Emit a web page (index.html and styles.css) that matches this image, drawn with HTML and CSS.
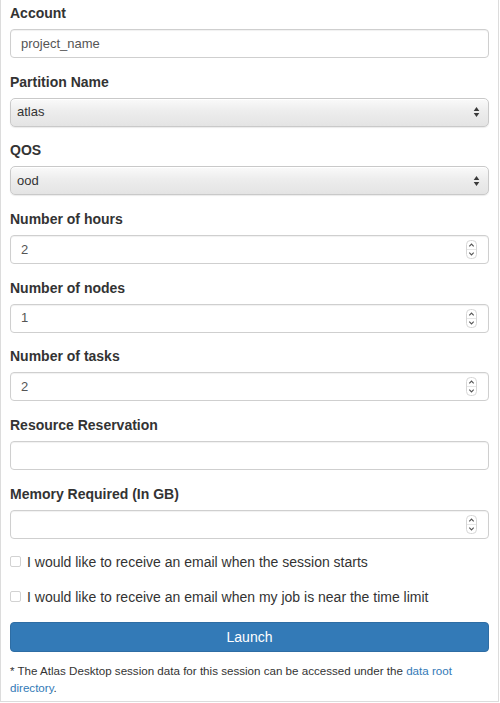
FILE: index.html
```html
<!DOCTYPE html>
<html>
<head>
<meta charset="utf-8">
<link rel="stylesheet" href="styles.css">
</head>
<body>
<div class="panel">
  <form class="form">
    <div class="group">
      <label class="label">Account</label>
      <div class="control"><input class="field" value="project_name"></div>
    </div>
    <div class="group">
      <label class="label">Partition Name</label>
      <div class="control select"><span class="field sel-text">atlas</span>
        <svg class="arrows" width="7" height="12" viewBox="0 0 7 12"><path d="M3.5 1 L6.3 5 L0.7 5 Z M0.7 7 L6.3 7 L3.5 11 Z" fill="#3a3a3a"/></svg>
      </div>
    </div>
    <div class="group">
      <label class="label">QOS</label>
      <div class="control select"><span class="field sel-text">ood</span>
        <svg class="arrows" width="7" height="12" viewBox="0 0 7 12"><path d="M3.5 1 L6.3 5 L0.7 5 Z M0.7 7 L6.3 7 L3.5 11 Z" fill="#3a3a3a"/></svg>
      </div>
    </div>
    <div class="group">
      <label class="label">Number of hours</label>
      <div class="control"><input class="field" value="2">
        <svg class="spin" width="11" height="19" viewBox="0 0 11 19"><rect x="0.5" y="0.5" width="10" height="18" rx="4" fill="#fff" stroke="#d6d6d6"/><line x1="1" y1="9.5" x2="10" y2="9.5" stroke="#e6e6e6"/><path d="M3.3 6.3 L5.5 4 L7.7 6.3" fill="none" stroke="#555" stroke-width="1.1"/><path d="M3.3 12.7 L5.5 15 L7.7 12.7" fill="none" stroke="#555" stroke-width="1.1"/></svg>
      </div>
    </div>
    <div class="group">
      <label class="label">Number of nodes</label>
      <div class="control"><input class="field" value="1">
        <svg class="spin" width="11" height="19" viewBox="0 0 11 19"><rect x="0.5" y="0.5" width="10" height="18" rx="4" fill="#fff" stroke="#d6d6d6"/><line x1="1" y1="9.5" x2="10" y2="9.5" stroke="#e6e6e6"/><path d="M3.3 6.3 L5.5 4 L7.7 6.3" fill="none" stroke="#555" stroke-width="1.1"/><path d="M3.3 12.7 L5.5 15 L7.7 12.7" fill="none" stroke="#555" stroke-width="1.1"/></svg>
      </div>
    </div>
    <div class="group">
      <label class="label">Number of tasks</label>
      <div class="control"><input class="field" value="2">
        <svg class="spin" width="11" height="19" viewBox="0 0 11 19"><rect x="0.5" y="0.5" width="10" height="18" rx="4" fill="#fff" stroke="#d6d6d6"/><line x1="1" y1="9.5" x2="10" y2="9.5" stroke="#e6e6e6"/><path d="M3.3 6.3 L5.5 4 L7.7 6.3" fill="none" stroke="#555" stroke-width="1.1"/><path d="M3.3 12.7 L5.5 15 L7.7 12.7" fill="none" stroke="#555" stroke-width="1.1"/></svg>
      </div>
    </div>
    <div class="group">
      <label class="label">Resource Reservation</label>
      <div class="control"><input class="field" value=""></div>
    </div>
    <div class="group">
      <label class="label">Memory Required (In GB)</label>
      <div class="control"><input class="field" value="">
        <svg class="spin" width="11" height="19" viewBox="0 0 11 19"><rect x="0.5" y="0.5" width="10" height="18" rx="4" fill="#fff" stroke="#d6d6d6"/><line x1="1" y1="9.5" x2="10" y2="9.5" stroke="#e6e6e6"/><path d="M3.3 6.3 L5.5 4 L7.7 6.3" fill="none" stroke="#555" stroke-width="1.1"/><path d="M3.3 12.7 L5.5 15 L7.7 12.7" fill="none" stroke="#555" stroke-width="1.1"/></svg>
      </div>
    </div>
    <div class="check first"><span class="box"></span><span>I would like to receive an email when the session starts</span></div>
    <div class="check"><span class="box"></span><span>I would like to receive an email when my job is near the time limit</span></div>
    <button type="button" class="launch">Launch</button>
    <p class="note">* The Atlas Desktop session data for this session can be accessed under the <a href="#" class="link">data root directory</a>.</p>
  </form>
</div>
</body>
</html>
```

FILE: styles.css
```css
html, body {
  margin: 0;
  padding: 0;
  background: #fff;
}
body {
  font-family: "Liberation Sans", Arial, sans-serif;
  color: #333;
}
.panel {
  box-sizing: border-box;
  width: 499px;
  height: 702px;
  border: 1px solid #dcdcdc;
  border-top: none;
  padding: 3px 9px 0 9px;
}
.form {
  margin: 0;
}
.group {
  margin-bottom: 13.7px;
}
.label {
  display: block;
  font-size: 14px;
  font-weight: bold;
  line-height: 20px;
  margin-bottom: 6px;
  color: #333;
}
.control {
  box-sizing: border-box;
  height: 29px;
  border: 1px solid #cfcfcf;
  border-radius: 4px;
  box-shadow: inset 0 1px 1px rgba(0,0,0,0.06);
  display: flex;
  align-items: center;
  padding: 0 11px 0 10px;
  background: #fff;
}
.field {
  flex: 1;
  min-width: 0;
  border: none;
  outline: none;
  padding: 0;
  margin: 0;
  background: transparent;
  font-family: "Liberation Sans", Arial, sans-serif;
  font-size: 13px;
  color: #555;
  height: 20px;
  line-height: 20px;
}
.select {
  border-color: #c9c9c9;
  border-radius: 5px;
  background: linear-gradient(to bottom, #fafafa 0%, #ededed 45%, #e4e4e4 100%);
  box-shadow: inset 0 1px 0 #fff, 0 1px 1px rgba(0,0,0,0.08);
  padding: 0 8px 0 6px;
}
.sel-text {
  color: #333;
}
.arrows {
  flex: none;
}
.spin {
  flex: none;
}
.check {
  display: flex;
  align-items: center;
  height: 20px;
  font-size: 14px;
  line-height: 20px;
  color: #333;
  margin-bottom: 15px;
}
.check.first {
  margin-top: -0.7px;
}
.box {
  box-sizing: border-box;
  width: 11px;
  height: 11px;
  border: 1px solid #d2d2d2;
  border-radius: 2px;
  background: #fff;
  margin: 0 6px 0 0;
  flex: none;
}
.launch {
  display: block;
  box-sizing: border-box;
  width: 100%;
  height: 30px;
  margin: 0;
  padding: 0;
  border: 1px solid #2e6da4;
  border-radius: 4px;
  background: #337ab7;
  color: #fff;
  font-family: "Liberation Sans", Arial, sans-serif;
  font-size: 14px;
  line-height: 28px;
  text-align: center;
}
.note {
  margin: 10.5px 0 0 0;
  font-size: 11.6px;
  line-height: 17px;
  color: #333;
}
.link {
  color: #337ab7;
  text-decoration: none;
}
```
